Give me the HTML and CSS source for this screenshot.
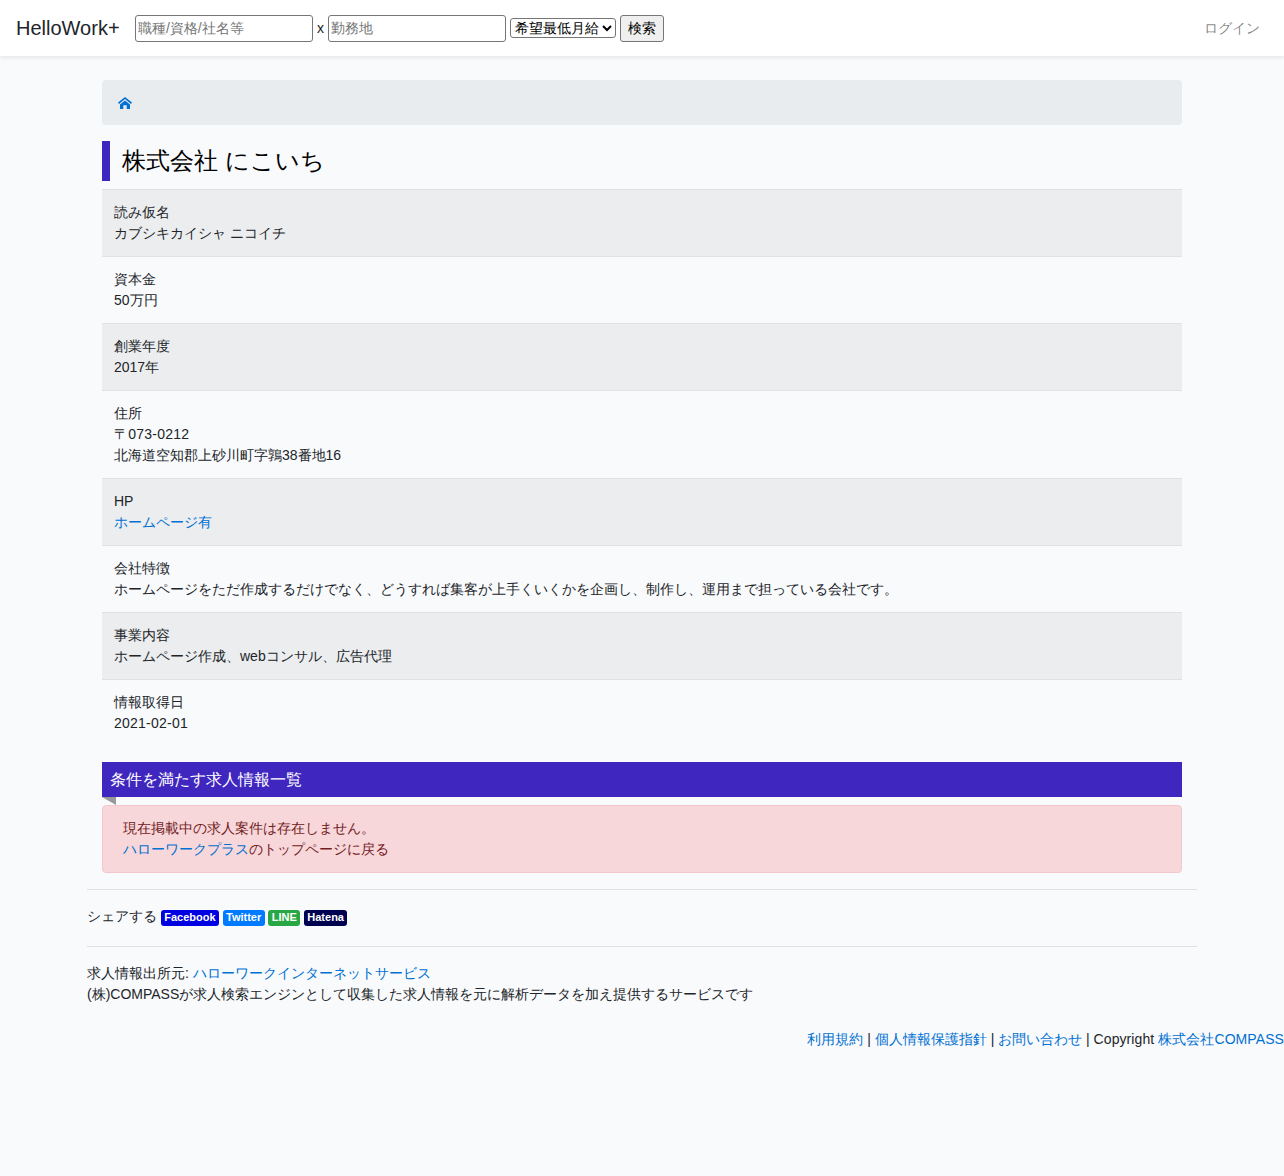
FILE: index.html
```html
<!DOCTYPE html>
<html lang="ja">
<head>
<meta charset="utf-8">
<title>株式会社 にこいち</title>
<link rel="stylesheet" href="styles.css">
</head>
<body>
<nav class="navbar">
  <a class="brand" href="#">HelloWork+</a>
  <form class="search">
    <input class="field" type="text" placeholder="職種/資格/社名等">
    <span class="times">x</span>
    <input class="field" type="text" placeholder="勤務地">
    <select class="salary"><option>希望最低月給</option></select>
    <button class="submit" type="button">検索</button>
  </form>
  <a class="login" href="#">ログイン</a>
</nav>
<main class="container">
  <div class="inner">
    <div class="breadcrumb">
      <a href="#" class="home" aria-label="home">
        <svg viewBox="0 0 14 12" width="14" height="12"><path fill="#0070d2" d="M7 0 14 5.600 13 6.900 7 2.100 1 6.900 0 5.600zM7 3.400 12 7.400V11.500a.5.5 0 0 1-.5.500H8.700V8.200H5.300V12H2.500a.5.5 0 0 1-.5-.5V7.400z"/></svg>
      </a>
    </div>
    <h1 class="title">株式会社 にこいち</h1>
    <div class="table">
      <div class="row"><div>読み仮名</div><div>カブシキカイシャ ニコイチ</div></div>
      <div class="row"><div>資本金</div><div>50万円</div></div>
      <div class="row"><div>創業年度</div><div>2017年</div></div>
      <div class="row"><div>住所</div><div class="num">〒073-0212</div><div>北海道空知郡上砂川町字鶉38番地16</div></div>
      <div class="row"><div>HP</div><div><a href="#">ホームページ有</a></div></div>
      <div class="row"><div>会社特徴</div><div>ホームページをただ作成するだけでなく、どうすれば集客が上手くいくかを企画し、制作し、運用まで担っている会社です。</div></div>
      <div class="row"><div>事業内容</div><div>ホームページ作成、webコンサル、広告代理</div></div>
      <div class="row"><div>情報取得日</div><div class="num">2021-02-01</div></div>
    </div>
    <h2 class="ribbon">条件を満たす求人情報一覧</h2>
    <div class="alert">
      <div>現在掲載中の求人案件は存在しません。</div>
      <div><a href="#">ハローワークプラス</a>のトップページに戻る</div>
    </div>
  </div>
  <hr class="rule">
  <p class="share">シェアする
    <a class="badge fb" href="#">Facebook</a>
    <a class="badge tw" href="#">Twitter</a>
    <a class="badge ln" href="#">LINE</a>
    <a class="badge hb" href="#">Hatena</a>
  </p>
  <hr class="rule">
  <p class="source">求人情報出所元: <a href="#">ハローワークインターネットサービス</a><br>(株)COMPASSが求人検索エンジンとして収集した求人情報を元に解析データを加え提供するサービスです</p>
</main>
<footer class="footer"><a href="#">利用規約</a> | <a href="#">個人情報保護指針</a> | <a href="#">お問い合わせ</a> | <span class="copy">Copyright</span> <a class="owner" href="#">株式会社COMPASS</a></footer>
</body>
</html>
```
FILE: styles.css
```css
* { box-sizing: border-box; }
html, body { margin: 0; padding: 0; }
body {
  min-height: 1176px;
  background: #f9fafc;
  color: #212529;
  font-family: "Liberation Sans", sans-serif;
  font-size: 14px;
  line-height: 21px;
}
a { color: #0070d2; text-decoration: none; }
.navbar {
  display: flex;
  align-items: center;
  height: 56px;
  padding: 0 8px 0 16px;
  background: #fff;
  box-shadow: 0 2px 4px rgba(0, 0, 0, .08);
}
.brand { color: #212529; font-size: 20px; line-height: 30px; margin-right: 15.400px; }
.search { display: flex; align-items: center; gap: 4px; flex: 1; font-size: 13.333px; }
.field {
  width: 178px;
  height: 27px;
  padding: 1px 2px;
  border: 1px solid #767676;
  border-radius: 3px;
  background: #fff;
  font: 14px "Liberation Sans", sans-serif;
}
.field::placeholder { color: #757575; }
.times { color: #212529; font-size: 14px; }
.salary {
  width: 106px;
  height: 20px;
  border: 1px solid #767676;
  border-radius: 3px;
  background: #fff;
  color: #000;
  font: 14px "Liberation Sans", sans-serif;
}
.submit {
  width: 44px;
  height: 27px;
  padding: 1px 0 0;
  border: 1px solid #767676;
  border-radius: 3px;
  background: #efefef;
  color: #000;
  font: 14px "Liberation Sans", sans-serif;
}
.login { color: rgba(0, 0, 0, .5); padding: 0 16px 0 8px; }
.container { width: 1110px; margin: 0 auto; padding-top: 24px; }
.inner { padding: 0 15px; }
.breadcrumb {
  display: flex;
  align-items: center;
  height: 45px;
  margin-bottom: 16px;
  padding: 0 16px;
  background: #e9ecef;
  border-radius: 4px;
}
.home { display: flex; }
.title {
  height: 40px;
  margin: 0 0 8px;
  padding-left: 12px;
  border-left: 8px solid #3f26bf;
  color: #000;
  font-size: 24px;
  font-weight: 400;
  line-height: 40px;
}
.table { margin-bottom: 16px; }
.row { padding: 12px; border-top: 1px solid #dee2e6; }
.row:nth-child(odd) { background: rgba(0, 0, 0, .05); }
.num { letter-spacing: .24px; }
.ribbon {
  position: relative;
  height: 35px;
  margin: 0 0 8px;
  padding: 0 8px;
  background: #3f26bf;
  color: #fff;
  font-size: 16px;
  font-weight: 400;
  line-height: 35px;
}
.ribbon::after {
  content: "";
  position: absolute;
  left: 0;
  top: 100%;
  border-top: 8px solid #999;
  border-left: 14px solid transparent;
}
.alert {
  padding: 12px 20px;
  margin-bottom: 16px;
  background: #f8d7da;
  border: 1px solid #f5c6cb;
  border-radius: 4px;
  color: #721c24;
}
.rule { margin: 0; border: 0; border-top: 1px solid rgba(0, 0, 0, .1); }
.share { margin: 16px 0 19px; }
.badge {
  display: inline-block;
  padding: 2px 3.300px 3px;
  border-radius: 3px;
  color: #fff;
  font-size: 11px;
  font-weight: 700;
  line-height: 11px;
  vertical-align: 0;
}
.fb { background: #0000e0; }
.tw { background: #007bff; }
.ln { background: #28a745; }
.hb { background: #000050; }
.source { margin: 16px 0 24px; }
.footer { text-align: right; }
.copy, .owner { letter-spacing: .08px; }
```
